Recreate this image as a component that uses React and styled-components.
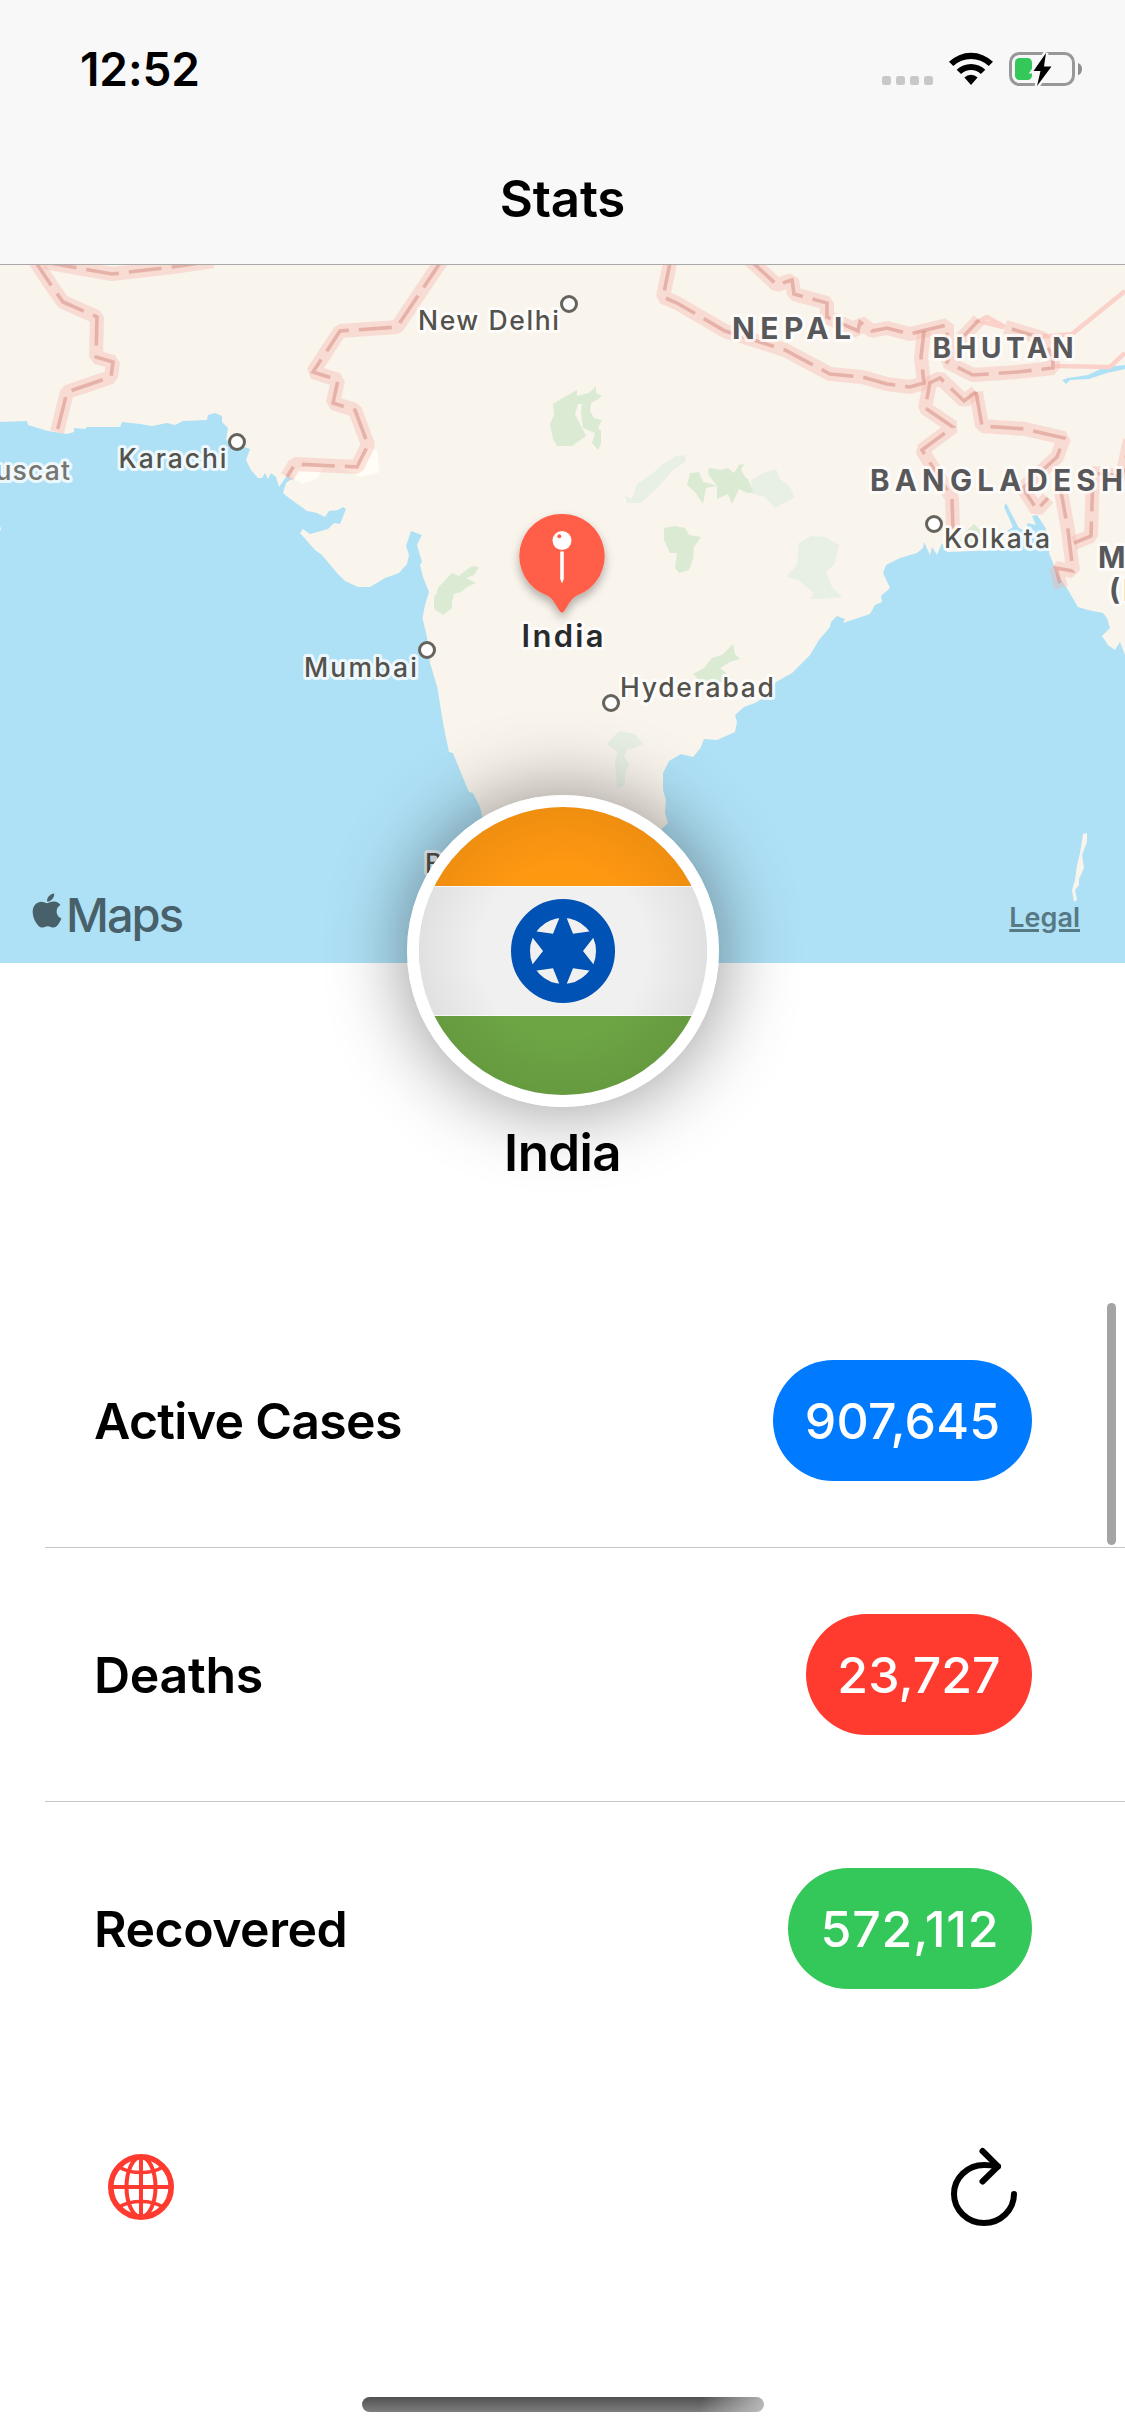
import React from "react";
import styled, { createGlobalStyle } from "styled-components";
import { FaApple } from "react-icons/fa";

const GlobalStyle = createGlobalStyle`
  *, *::before, *::after { box-sizing: border-box; }
  body { margin: 0; background: #fff; }
`;

const Screen = styled.div`
  width: 1125px;
  height: 2436px;
  display: flex;
  flex-direction: column;
  overflow: hidden;
  background: #fff;
  color: #000;
  font-family: Inter, "Liberation Sans", sans-serif;
`;

const Header = styled.header`
  height: 265px;
  flex: none;
  background: #f8f8f8;
  border-bottom: 1px solid #a9a9a9;
`;

const StatusBar = styled.div`
  height: 132px;
  padding: 0 41px 0 80px;
  display: flex;
  justify-content: space-between;
`;

const Clock = styled.time`
  padding-top: 41px;
  font-size: 46px;
  line-height: 56px;
  font-weight: 600;
  letter-spacing: -0.1px;
`;

const StatusIcons = styled.div`
  display: flex;
  align-items: flex-start;
  padding-top: 52px;
`;

const SignalDots = styled.div`
  display: flex;
  gap: 5px;
  margin: 24px 15px 0 0;
`;

const SignalDot = styled.i`
  width: 9px;
  height: 9px;
  border-radius: 2.5px;
  background: #c8c8c8;
`;

const WifiGlyph = styled.svg`
  display: block;
  width: 46px;
  height: 34px;
  margin-right: 15px;
`;

const BatteryGlyph = styled.svg`
  display: block;
  width: 75px;
  height: 34px;
`;

const Title = styled.h1`
  margin: 0;
  height: 132px;
  display: flex;
  align-items: center;
  justify-content: center;
  font-size: 51px;
  font-weight: 600;
  letter-spacing: -0.2px;
`;

const MapPanel = styled.section`
  position: relative;
  height: 698px;
  flex: none;
  overflow: hidden;
`;

const MapCanvas = styled.svg`
  display: block;
  width: 1125px;
  height: 698px;
  font-family: Inter, "Liberation Sans", sans-serif;
`;

const MapBrand = styled.div`
  position: absolute;
  left: 30px;
  bottom: 18px;
  display: flex;
  align-items: center;
  color: #48606a;
  font-size: 47px;
  line-height: 60px;
  font-weight: 500;
  letter-spacing: -2px;

  svg { width: 34px; height: 39px; margin: -9px 2px 0 0; }
`;

const LegalLink = styled.a`
  position: absolute;
  right: 45px;
  bottom: 28px;
  color: #567984;
  font-size: 27px;
  line-height: 34px;
  font-weight: 600;
  text-decoration: underline;
  text-decoration-thickness: 3px;
  text-underline-offset: 2px;
`;

const Profile = styled.section`
  position: relative;
  height: 331px;
  margin-top: -168px;
  margin-bottom: 168px;
  flex: none;
  display: flex;
  flex-direction: column;
  align-items: center;
`;

const FlagBadge = styled.div`
  width: 312px;
  height: 312px;
  flex: none;
  border: 12px solid #fff;
  border-radius: 50%;
  box-shadow: 0 0 80px rgba(0, 0, 0, 0.44);
  overflow: hidden;

  svg { display: block; width: 288px; height: 288px; }
`;

const CountryName = styled.h2`
  margin: 15px 0 0;
  font-size: 51px;
  line-height: 62px;
  font-weight: 600;
  letter-spacing: -0.6px;
`;

const StatList = styled.ul`
  position: relative;
  height: 762px;
  flex: none;
  margin: 0;
  padding: 0 0 0 45px;
  list-style: none;
`;

const StatRow = styled.li`
  height: 254px;
  padding: 0 93px 0 49px;
  display: flex;
  align-items: center;
  justify-content: space-between;
  border-bottom: 1px solid #c6c6c8;

  &:last-of-type { border-bottom-color: transparent; }
`;

const StatLabel = styled.span`
  font-size: 50px;
  line-height: 60px;
  font-weight: 600;
  letter-spacing: ${(p) => p.$tracking}px;
`;

const StatPill = styled.strong`
  width: ${(p) => p.$width}px;
  height: 121px;
  display: flex;
  align-items: center;
  justify-content: center;
  border-radius: 61px;
  background: ${(p) => p.$color};
  color: #fff;
  font-size: 50px;
  font-weight: 550;
  letter-spacing: ${(p) => p.$tracking}px;
`;

const ScrollThumb = styled.div`
  position: absolute;
  top: 9px;
  right: 9px;
  width: 9px;
  height: 242px;
  border-radius: 5px;
  background: #a4a4a4;
`;

const Toolbar = styled.nav`
  padding: 92px 108px 0;
  height: 341px;
  flex: none;
  display: flex;
  justify-content: space-between;
`;

const ToolButton = styled.button`
  width: 66px;
  height: 78px;
  padding: 0;
  border: 0;
  background: none;
  color: ${(p) => p.$color};

  svg { display: block; width: 66px; height: 78px; overflow: visible; }
`;

const HomeIndicator = styled.div`
  width: 402px;
  height: 15px;
  flex: none;
  align-self: center;
  border-radius: 8px;
  background:
    linear-gradient(100deg, transparent 84%, rgba(200, 200, 200, 0.85) 100%),
    linear-gradient(180deg, #505050, #7e7e7e);
`;

const CITY = "#54524c";

const borders = [
  "M33 258L53 288L63 302L97 317L96 357L113 362L111 377L67 392L57 432",
  "M44 262L112 274L173 267L213 261",
  "M442 260L397 327L340 331L313 372L338 380L333 403L355 410L368 445L357 467L295 464L287 477",
  "M671 258L663 297L677 303L725 331L760 342L785 350L830 374L862 377L887 384L910 387L924 383L921 357L924 331",
  "M750 260L777 285L792 280L794 294L827 303L827 317L858 331L860 322L872 331L887 328L910 334L947 325L947 345L951 353L947 362L973 375L1017 372L1053 368L1053 357L1042 338L1005 327",
  "M979 320L960 340",
  "M976 392L982 426L1025 429L1064 438L1057 457L1023 488L1037 510L1048 498",
  "M976 392L964 401L940 378L930 383L925 408L953 427L922 450L952 498L953 530",
  "M1060 486L1068 530L1073 571L1056 568L1061 588",
  "M1074 543L1091 536L1093 473L1122 476L1130 440",
];

const parks = [
  "M553 404L561 399L577 390L577 396L589 393L596 386L596 393L602 396L598 399L591 403L590 411L594 418L602 420L598 428L601 431L601 444L598 450L592 443L595 433L583 428L581 412L582 404L578 404L575 414L586 436L572 446L557 446L553 439L550 424L554 415Z",
  "M690 473L699 472L703 482L708 483L717 486L708 474L709 468L721 470L728 468L734 473L739 465L744 464L739 474L748 479L754 493L747 493L739 489L732 504L728 494L717 499L717 486L706 488L703 504L695 492L687 485Z",
  "M664 528L675 526L685 528L689 535L701 537L694 547L693 559L689 570L679 573L675 568L677 553L670 553L664 540Z",
  "M434 602L438 588L447 578L452 573L459 576L465 571L472 566L479 567L474 575L466 578L476 583L467 587L461 592L454 594L451 606L443 614L435 610Z",
  "M693 674L704 668L712 658L722 655L733 644L735 654L740 659L730 662L720 668L731 677L727 682L701 682Z",
  "M738 464L745 477L753 490L748 493L738 487Z",
  "M434 595L451 595L452 608L443 615L434 608Z",
  "M967 530L974 524L980 530L983 541L954 549Z",
];

const paleParks = [
  "M625 496L632 499L637 484L646 478L653 473L663 464L676 456L685 455L686 461L672 471L659 486L646 498L641 503L627 503Z",
  "M751 480L764 473L776 469L780 479L789 486L795 497L786 502L775 508L765 497L753 494Z",
  "M799 543L811 536L825 537L839 545L834 565L826 572L832 587L842 597L820 599L810 599L814 593L798 580L787 577L797 564Z",
  "M619 731L635 734L643 744L635 748L628 749L624 756L629 765L625 773L625 785L617 789L615 760L618 752L607 744Z",
];

const cities = [
  [237, 442],
  [569, 304],
  [934, 524],
  [427, 650],
  [611, 703],
];

const labels = [
  { text: "New Delhi", x: 418, y: 330, w: 141, size: 26.5 },
  { text: "Karachi", x: 118.5, y: 468, w: 108, size: 26.5 },
  { text: "Muscat", x: -30, y: 480, w: 100, size: 26.5, color: "#77756f" },
  { text: "Kolkata", x: 944, y: 548, w: 106, size: 26.5 },
  { text: "Mumbai", x: 304, y: 677, w: 113, size: 26.5 },
  { text: "Hyderabad", x: 620, y: 697, w: 154, size: 26.5 },
  { text: "Bengaluru", x: 425, y: 873, w: 130, size: 26.5 },
  { text: "NEPAL", x: 732, y: 338.5, w: 119, size: 30, weight: 700 },
  { text: "BHUTAN", x: 932.5, y: 358, w: 141, size: 28, weight: 700 },
  { text: "BANGLADESH", x: 870, y: 491, w: 253, size: 29.5, weight: 700 },
  { text: "MYANMAR", x: 1098, y: 568, w: 180, size: 29.5, weight: 700 },
  { text: "(BURMA)", x: 1109, y: 601, w: 150, size: 29.5, weight: 700 },
  { text: "India", x: 521.5, y: 647, w: 82, size: 31, weight: 600, color: "#292a2c" },
];

function RegionMap() {
  return (
    <MapCanvas viewBox="0 265 1125 698">
      <defs>
        <filter id="pinShadow" x="-40%" y="-40%" width="180%" height="180%">
          <feDropShadow dx="0" dy="5" stdDeviation="5" floodOpacity="0.3" />
        </filter>
      </defs>
      <rect y="260" width="1125" height="710" fill="#f9f4ec" />
      {paleParks.map((d) => <path key={d} d={d} fill="#e8f0e5" />)}
      {parks.map((d) => <path key={d} d={d} fill="#dbebd3" />)}
      <path fill="#fffdf5" d="M293 469L325 463L318 478L302 484L293 478ZM340 467L355 466L369 448L377 450L379 465L378 473L360 477Z" />
      <g fill="#afe1f6">
        <path d="M0 422L27 421L28 425L48 431L67 434L74 432L74 428L85 429L87 427L120 427L122 422L140 424L152 426L167 423L175 425L183 421L207 420L208 415L215 413L222 416L222 422L228 428L226 440L250 449L246 460L251 470L258 478L262 478L265 473L268 479L271 473L276 477L279 487L286 477L293 478L286 483L283 493L289 498L307 511L317 513L325 517L329 511L338 510L343 507L346 509L340 524L334 523L328 529L310 534L303 529L300 533L315 550L322 555L337 573L345 581L358 587L370 587L385 578L399 573L407 564L409 555L406 546L411 531L422 535L417 545L422 562L420 565L423 577L429 592L425 605L422.500 618L427 637L430 663L437.500 688L442 717L445 733L449 752L453 753L461 773L469 792L473 793L480 807L483 820L500 870L500 970L0 970Z" />
        <path d="M1125 655L1120 642L1115 650L1108 645L1102 636L1110 628L1107 618L1103 613L1088 610L1078 607L1068 590L1057 573L1049 553L1050 540L1045 527L1037 515L1032 516L1036 525L1027 523L1028 532L1019 528L1011 513L1006 503L1004 507L1009 518L1013 527L1007 531L1017 540L1000 550L947 552L942 543L937 555L932 547L930 555L924 542L923 548L917 553L900 558L886 565L883 573L890 588L881 596L882 602L875 605L870 614L843 623L845 619L837 616L831 622L830 627L819 640L810 655L803 662L792 673L776 682L765 697L755 703L744 707L735 715L737 722L735 732L717 740L704 739L700.500 748L693 757L681 754L669 761L663 773L663 790L666 800L665 813L668 823L650 840L600 970L1125 970Z" />
        <path d="M1062 380L1068 378L1088 375L1105 367L1125 365L1125 369L1107 373L1089 379L1070 380L1066 384Z" />
      </g>
      <path fill="#f9f4ec" d="M1083 834L1087 833L1087 842L1082 855L1084 868L1079 879L1079 885L1075 890L1077 900L1074 902L1072 890L1075 880L1077 865L1080 853ZM0 526L1 529L0 531Z" />
      <g fill="none" stroke="#fbd2ca" strokeWidth="4.500">
        <path d="M1005 327L987 317L979 321L1003 327M1037 336L1050 336L1072 334L1125 291M1055 366L1110 367L1125 353" />
      </g>
      <g fill="none" stroke="#f8b6ab" strokeOpacity="0.38" strokeWidth="14" strokeLinejoin="bevel">
        {borders.map((d) => <path key={d} d={d} />)}
      </g>
      <g fill="none" stroke="#d99388" strokeOpacity="0.58" strokeWidth="3.6" strokeDasharray="33 10">
        {borders.map((d) => <path key={d} d={d} />)}
      </g>
      {cities.map(([x, y]) => (
        <circle key={x} cx={x} cy={y} r="7.500" fill="#fff" stroke="#65635b" strokeWidth="3" />
      ))}
      {labels.map((l) => (
        <text
          key={l.text}
          x={l.x}
          y={l.y}
          textLength={l.w}
          fontSize={l.size}
          fontWeight={l.weight || 500}
          fill={l.color || (l.weight ? "#58585a" : CITY)}
          stroke="#fff"
          strokeOpacity="0.78"
          strokeWidth="6"
          strokeLinejoin="round"
          paintOrder="stroke"
        >
          {l.text}
        </text>
      ))}
      <g filter="url(#pinShadow)">
        <path fill="#ff5e49" d="M562 514A42 42 0 0 1 577 595.500C570 599 567 608 563.500 612Q562 613.500 560.500 612C557 608 554 599 547 595.500A42 42 0 0 1 562 514Z" />
      </g>
      <circle cx="562" cy="540.500" r="9.500" fill="#fff" />
      <circle cx="559.300" cy="536.300" r="2" fill="#ff5e49" />
      <path fill="#fff" d="M560.200 551.500H563.800V579L562 583.500L560.200 579Z" />
    </MapCanvas>
  );
}

const starPoints = Array.from({ length: 12 }, (_, i) => {
  const radius = i % 2 ? 20 : 42;
  const angle = (i * Math.PI) / 6;
  return `${144 + radius * Math.sin(angle)},${144 - radius * Math.cos(angle)}`;
}).join(" ");

function Flag() {
  return (
    <svg viewBox="0 0 288 288">
      <defs>
        <radialGradient id="flagShade" cx="50%" cy="50%" r="50%">
          <stop offset="0.580" stopColor="#000" stopOpacity="0" />
          <stop offset="1" stopColor="#000" stopOpacity="0.065" />
        </radialGradient>
      </defs>
      <rect width="288" height="288" fill="#f0f0f0" />
      <rect width="288" height="79" fill="#ff9811" />
      <rect y="209" width="288" height="79" fill="#6da544" />
      <rect width="288" height="288" fill="url(#flagShade)" />
      <path d="M0 79.500H288M0 208.500H288" stroke="#fff" strokeOpacity="0.7" />
      <circle cx="144" cy="144" r="42.500" fill="#f0f0f0" stroke="#0052b4" strokeWidth="19" />
      <polygon points={starPoints} fill="#0052b4" />
    </svg>
  );
}

function Wifi() {
  return (
    <WifiGlyph viewBox="0 0 46 34">
      <path d="M1 9.800A31.400 31.400 0 0 1 45 9.800L40.700 14.100A25.300 25.300 0 0 0 5.300 14.100Z" />
      <path d="M8.700 17.700A20.500 20.500 0 0 1 37.300 17.700L32.900 22.100A14.300 14.300 0 0 0 13.100 22.100Z" />
      <path d="M16.400 25.400A9.800 9.800 0 0 1 29.600 25.400L23 33Z" />
    </WifiGlyph>
  );
}

function Battery() {
  return (
    <BatteryGlyph viewBox="0 0 75 34">
      <rect x="1.500" y="1.500" width="63" height="31" rx="9" fill="none" stroke="#989898" strokeWidth="3" />
      <path d="M69 11Q73 12.500 73 17T69 23.500Z" fill="#8f8f8f" />
      <rect x="6" y="6" width="17" height="22" rx="4.500" fill="#34c759" />
      <path d="M37 1L24.500 19H31.500L28 34L42.500 14.500H35Z" fill="#000" stroke="#f8f8f8" strokeWidth="5" paintOrder="stroke" />
    </BatteryGlyph>
  );
}

function GlobeIcon() {
  return (
    <svg viewBox="0 0 66 78" fill="none" stroke="currentColor" strokeWidth="4">
      <circle cx="33" cy="39" r="30.200" strokeWidth="5.600" />
      <path d="M33 9V69M3 39H63" />
      <ellipse cx="33" cy="39" rx="14.500" ry="30" />
      <path d="M11 19Q20 24.500 33 24.500T55 19M11 59Q20 53.500 33 53.500T55 59" strokeWidth="3.500" />
    </svg>
  );
}

function RefreshIcon() {
  return (
    <svg viewBox="0 0 66 78" fill="none" stroke="currentColor" strokeWidth="6" strokeLinecap="round" strokeLinejoin="round">
      <path d="M63 46A30 29 0 1 1 33 17Q40 17 47 18.500" />
      <path d="M31.500 3L47 18.300L31.500 33.500" />
    </svg>
  );
}

const stats = [
  { label: "Active Cases", value: "907,645", color: "#007aff", width: 259, lt: -0.7, vt: 0.2 },
  { label: "Deaths", value: "23,727", color: "#ff3b30", width: 226, lt: -0.3, vt: 0 },
  { label: "Recovered", value: "572,112", color: "#34c759", width: 244, lt: -0.5, vt: 0.8 },
];

export default function App() {
  return (
    <Screen>
      <GlobalStyle />
      <Header>
        <StatusBar>
          <Clock>12:52</Clock>
          <StatusIcons>
            <SignalDots>
              <SignalDot /><SignalDot /><SignalDot /><SignalDot />
            </SignalDots>
            <Wifi />
            <Battery />
          </StatusIcons>
        </StatusBar>
        <Title>Stats</Title>
      </Header>
      <MapPanel>
        <RegionMap />
        <MapBrand><FaApple />Maps</MapBrand>
        <LegalLink>Legal</LegalLink>
      </MapPanel>
      <Profile>
        <FlagBadge><Flag /></FlagBadge>
        <CountryName>India</CountryName>
      </Profile>
      <StatList>
        {stats.map((s) => (
          <StatRow key={s.label}>
            <StatLabel $tracking={s.lt}>{s.label}</StatLabel>
            <StatPill $color={s.color} $width={s.width} $tracking={s.vt}>{s.value}</StatPill>
          </StatRow>
        ))}
        <ScrollThumb />
      </StatList>
      <Toolbar>
        <ToolButton $color="#ff3b30" aria-label="World"><GlobeIcon /></ToolButton>
        <ToolButton $color="#000" aria-label="Refresh"><RefreshIcon /></ToolButton>
      </Toolbar>
      <HomeIndicator />
    </Screen>
  );
}
